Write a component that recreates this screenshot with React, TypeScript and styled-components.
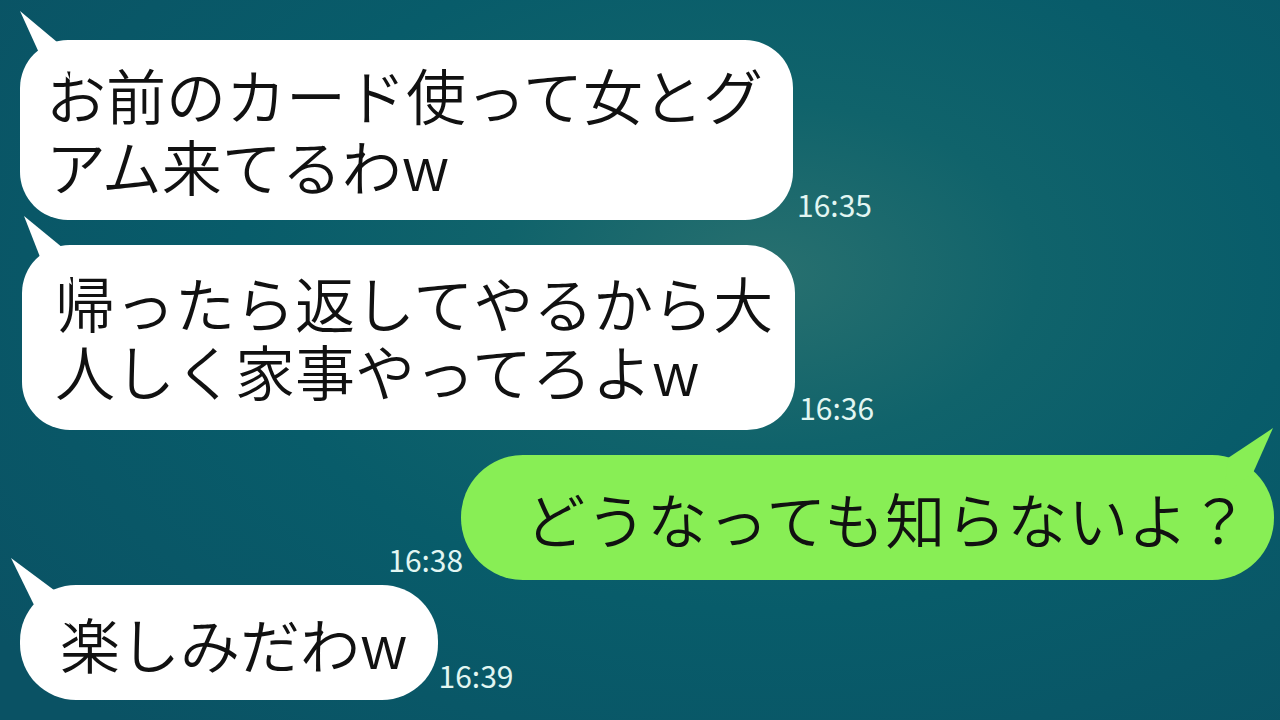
import styled, { createGlobalStyle } from "styled-components";

const GlobalStyle = createGlobalStyle`
  html, body {
    margin: 0;
    padding: 0;
  }
  body {
    font-family: "Noto Sans CJK JP", "Noto Sans", sans-serif;
  }
`;

const Screen = styled.div`
  width: 1280px;
  height: 720px;
  overflow: hidden;
  background: radial-gradient(
    ellipse 75% 85% at 60% 38%,
    #28706f 0%,
    #10636b 28%,
    #085c6a 55%,
    #0a5264 100%
  );
  display: flex;
  flex-direction: column;
  padding-top: 40px;
  box-sizing: border-box;
`;

const Row = styled.div<{ $mine?: boolean; $gap: number; $inset: number }>`
  display: flex;
  align-items: flex-end;
  justify-content: ${({ $mine }) => ($mine ? "flex-end" : "flex-start")};
  margin-top: ${({ $gap }) => $gap}px;
  padding-left: ${({ $mine, $inset }) => ($mine ? 0 : $inset)}px;
  padding-right: ${({ $mine, $inset }) => ($mine ? $inset : 0)}px;
`;

const Bubble = styled.div<{
  $mine?: boolean;
  $pad: string;
  $lh: number;
  $radius: number;
  $track?: number;
}>`
  position: relative;
  background: ${({ $mine }) => ($mine ? "#88ee55" : "#ffffff")};
  color: #111;
  font-size: 60px;
  font-weight: 350;
  letter-spacing: ${({ $track }) => $track ?? 0}px;
  line-height: ${({ $lh }) => $lh}px;
  white-space: nowrap;
  padding: ${({ $pad }) => $pad};
  border-radius: ${({ $radius }) => $radius}px;
`;

const Tail = styled.svg<{ $mine?: boolean }>`
  position: absolute;
  top: -40px;
  ${({ $mine }) => ($mine ? "right: -10px;" : "left: -20px;")}
  width: 80px;
  height: 90px;
  overflow: visible;
`;

const Time = styled.span<{ $bottom: number; $side: number; $mine?: boolean }>`
  font-family: "Noto Sans CJK JP", "Noto Sans", sans-serif;
  font-size: 30px;
  font-weight: 400;
  line-height: 30px;
  color: #e2f6f2;
  margin-bottom: ${({ $bottom }) => $bottom}px;
  ${({ $mine, $side }) =>
    $mine ? `margin-right: ${$side}px;` : `margin-left: ${$side}px;`}
`;

const LeftTail = ({ points }: { points: string }) => (
  <Tail viewBox="-20 -40 80 90">
    <polygon points={points} fill="#ffffff" />
  </Tail>
);

const RightTail = ({ points }: { points: string }) => (
  <Tail $mine viewBox="-70 -40 80 90">
    <polygon points={points} fill="#88ee55" />
  </Tail>
);

const App = () => {
  return (
    <>
      <GlobalStyle />
      <Screen>
        <Row $gap={0} $inset={20}>
          <Bubble $pad="18px 30px 20px 26px" $lh={71} $radius={48}>
            <LeftTail points="0,-29 37,2 50,40 20,15" />
            お前のカード使って女とグ
            <br />
            アム来てるわw
          </Bubble>
          <Time $bottom={1} $side={4}>
            16:35
          </Time>
        </Row>

        <Row $gap={25} $inset={22}>
          <Bubble $pad="23px 22px 26px 33px" $lh={68} $radius={48}>
            <LeftTail points="2,-29 41,3 50,40 20,17" />
            帰ったら返してやるから大
            <br />
            人しく家事やってろよw
          </Bubble>
          <Time $bottom={8} $side={4}>
            16:36
          </Time>
        </Row>

        <Row $mine $gap={25} $inset={6}>
          <Time $mine $bottom={6} $side={-2}>
            16:38
          </Time>
          <Bubble $mine $pad="0 24px 0 64px" $lh={125} $radius={62} $track={1}>
            <RightTail points="-1,-27 -21,18 -50,40 -46,3" />
            どうなっても知らないよ？
          </Bubble>
        </Row>

        <Row $gap={5} $inset={20}>
          <Bubble $pad="0 30px 0 40px" $lh={115} $radius={56}>
            <LeftTail points="-9,-27 38,8 50,40 16,24" />
            楽しみだわw
          </Bubble>
          <Time $bottom={10} $side={1}>
            16:39
          </Time>
        </Row>
      </Screen>
    </>
  );
};

export default App;
